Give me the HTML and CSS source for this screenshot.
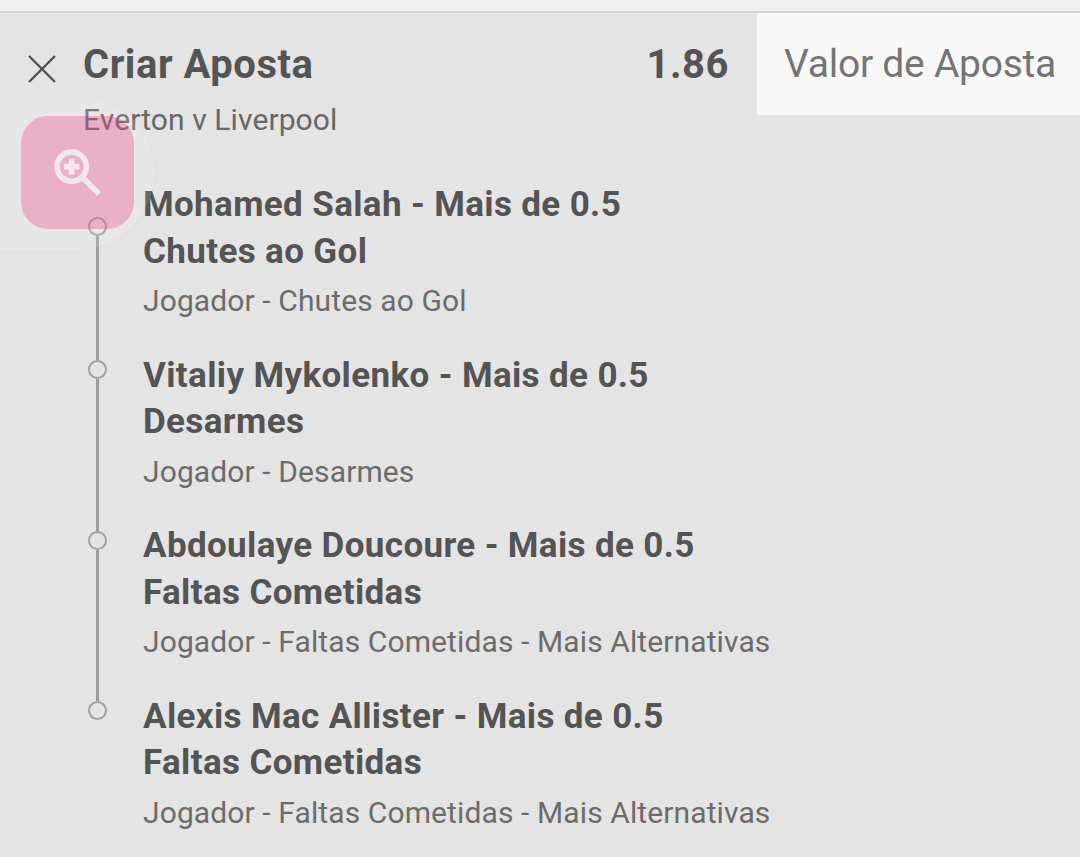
FILE: index.html
```html
<!DOCTYPE html>
<html lang="pt-BR">
<head>
<meta charset="utf-8">
<title>Criar Aposta</title>
<link rel="stylesheet" href="styles.css">
</head>
<body>
<div class="topbar"></div>
<main class="slip">
  <header class="head">
    <svg class="close" viewBox="0 0 28 28"><path d="M1 1 27 27M27 1 1 27"/></svg>
    <div class="heading">
      <h1 class="title">Criar Aposta</h1>
      <p class="match">Everton v Liverpool</p>
    </div>
    <div class="odds">1.86</div>
    <div class="stake"><span class="stake-label">Valor de Aposta</span></div>
  </header>
  <ul class="legs">
    <li class="leg">
      <div class="rail first"><i class="dot"></i><i class="line"></i></div>
      <div class="info"><h2 class="pick">Mohamed Salah - Mais de 0.5<br>Chutes ao Gol</h2><p class="market">Jogador - Chutes ao Gol</p></div>
    </li>
    <li class="leg">
      <div class="rail"><i class="line upper"></i><i class="dot"></i><i class="line"></i></div>
      <div class="info"><h2 class="pick">Vitaliy Mykolenko - Mais de 0.5<br>Desarmes</h2><p class="market">Jogador - Desarmes</p></div>
    </li>
    <li class="leg">
      <div class="rail"><i class="line upper"></i><i class="dot"></i><i class="line"></i></div>
      <div class="info"><h2 class="pick">Abdoulaye Doucoure - Mais de 0.5<br>Faltas Cometidas</h2><p class="market">Jogador - Faltas Cometidas - Mais Alternativas</p></div>
    </li>
    <li class="leg">
      <div class="rail"><i class="line upper"></i><i class="dot"></i></div>
      <div class="info"><h2 class="pick">Alexis Mac Allister - Mais de 0.5<br>Faltas Cometidas</h2><p class="market">Jogador - Faltas Cometidas - Mais Alternativas</p></div>
    </li>
  </ul>
</main>
<div class="bubble">
  <div class="bubble-tile">
    <svg class="zoom-icon" viewBox="0 0 48 48">
      <circle cx="17.7" cy="17.6" r="14.7"/>
      <path class="handle" d="M28 28 45 45"/>
      <path class="plus" d="M17.7 9.8v15.6M9.9 17.6h15.6"/>
    </svg>
  </div>
</div>
</body>
</html>
```

FILE: styles.css
```css
* { box-sizing: border-box; margin: 0; padding: 0; }
body {
  width: 1080px;
  height: 857px;
  overflow: hidden;
  position: relative;
  background: #e4e4e4;
  font-family: Roboto, "Liberation Sans", sans-serif;
  color: #545454;
}
.topbar { height: 13px; background: #efefef; border-bottom: 2px solid #d5d5d5; }
.head { display: flex; height: 169px; align-items: flex-start; }
.close { width: 28px; height: 28px; margin: 42px 0 0 28px; flex: none; }
.close path { stroke: #505050; stroke-width: 2.3; fill: none; }
.heading { margin-left: 27px; padding-top: 28px; flex: 1; white-space: nowrap; }
.title { font-size: 40px; line-height: 48px; font-weight: 700; letter-spacing: 0.52px; }
.match { font-size: 30px; line-height: 40px; margin-top: 11px; color: #686868; letter-spacing: 0.09px; }
.odds { font-size: 40px; line-height: 48px; font-weight: 700; padding-top: 28px; margin-right: 28px; letter-spacing: 0.5px; }
.stake { width: 323px; height: 102px; background: #f8f8f8; padding: 27px 0 0 27px; white-space: nowrap; }
.stake-label { font-size: 39px; line-height: 48px; color: #757575; letter-spacing: -0.25px; }
.legs { list-style: none; }
.leg { display: flex; height: 170.5px; }
.rail { width: 20px; margin-left: 87px; flex: none; display: flex; flex-direction: column; align-items: center; }
.rail.first { padding-top: 35px; }
.line { width: 3px; flex: 1; background: #9c9c9c; }
.line.upper { flex: none; height: 7.5px; }
.dot { width: 19px; height: 19px; border: 2px solid #a0a0a0; border-radius: 50%; flex: none; }
.info { margin-left: 36px; white-space: nowrap; }
.pick { font-size: 35px; line-height: 46.6px; font-weight: 700; letter-spacing: 0.36px; }
.market { font-size: 30px; line-height: 40px; margin-top: 6px; color: #6c6c6c; letter-spacing: 0.11px; }
.bubble {
  position: absolute;
  left: 0;
  top: 95px;
  width: 154px;
  height: 155px;
  padding: 21px 0 0 21px;
  border-radius: 0 78px 78px 0;
  background: rgba(255, 255, 255, 0.12);
  box-shadow: 0 0 3px rgba(0, 0, 0, 0.03);
}
.bubble-tile { width: 113px; height: 113px; border-radius: 27px; background: rgba(238, 10, 104, 0.25); padding: 33px; }
.zoom-icon { display: block; width: 48px; height: 48px; }
.zoom-icon circle, .zoom-icon path { fill: none; stroke: #f0e8ec; stroke-width: 5.6; }
```
